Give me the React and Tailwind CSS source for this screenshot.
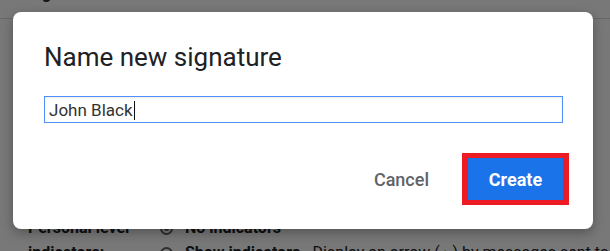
import React from "react";

function Radio({ checked }) {
  return (
    <span className="shrink-0 w-[13px] h-[13px] rounded-full border-2 border-[#5f6368] flex items-center justify-center">
      {checked && <span className="w-[5px] h-[5px] rounded-full bg-[#5f6368]" />}
    </span>
  );
}

export default function App() {
  return (
    <div className="relative w-[610px] h-[251px] overflow-hidden bg-white text-[#202124] font-['Roboto','Liberation_Sans',sans-serif]">
      {/* settings page behind the modal */}
      <div className="flex h-[19px] border-b border-[#dadce0] pl-[28px]">
        <div className="-mt-[16px] text-[16px] font-bold leading-[20px]">Signature:</div>
      </div>
      <div className="h-[199px]" />
      <div className="flex flex-col gap-[5px] pl-[28px] text-[16px] leading-[20px]">
        <div className="flex items-center">
          <span className="w-[132px] shrink-0 font-bold">Personal level</span>
          <Radio checked />
          <span className="ml-[12px] font-bold">No indicators</span>
        </div>
        <div className="flex items-center whitespace-nowrap">
          <span className="w-[132px] shrink-0 font-bold">indicators:</span>
          <Radio />
          <span className="ml-[12px] font-bold">Show indicators</span>
          <span>&nbsp;- Display an arrow ( › ) by messages sent to my address</span>
        </div>
      </div>

      {/* backdrop */}
      <div className="absolute inset-0 bg-black/[0.53]" />

      {/* dialog */}
      <div className="absolute left-[13px] top-[12px] w-[580px] rounded-[8px] bg-white shadow-[0_4px_12px_rgba(0,0,0,0.3)] pt-[29px] pl-[31px] pr-[30px] pb-[29px]">
        <h2 className="text-[26px] leading-[32px] text-[#202124] font-normal">Name new signature</h2>
        <div className="mt-[23px] h-[27px] border border-[#4d90fe] shadow-[inset_0_1px_2px_rgba(0,0,0,0.08)] pl-[4px] pt-[2px] flex items-center text-[17px] text-[#333]">
          <span>John Black</span>
          <span className="ml-[1px] w-[1px] h-[19px] bg-[#111]" />
        </div>
        <div className="mt-[35px] flex items-center justify-end">
          <button className="mr-[33px] text-[18px] font-medium text-[#5f6368]">Cancel</button>
          <div className="-my-[5px] -mr-[6px] border-[#ed1c24] border-x-[6px] border-y-[5px]">
            <button className="w-[95px] h-[42px] bg-[#1a73e8] text-white text-[18px] font-bold">Create</button>
          </div>
        </div>
      </div>
    </div>
  );
}
